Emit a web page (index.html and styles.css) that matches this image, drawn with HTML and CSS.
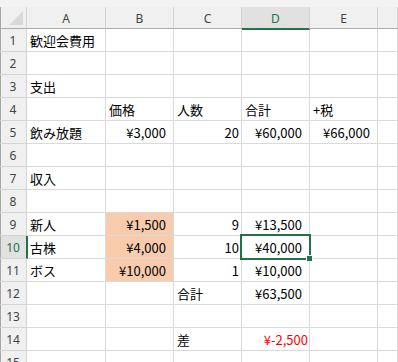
FILE: index.html
```html
<!DOCTYPE html>
<html lang="ja">
<head>
<meta charset="utf-8">
<title>歓迎会費用</title>
<link rel="stylesheet" href="styles.css">
</head>
<body>
<div class="sheet">
  <div class="strip"></div>
  <div class="grid">
    <div class="corner"><svg width="14" height="14" viewBox="0 0 14 14"><polygon points="0,14 14,14 14,0" fill="#d9d9d9"/></svg></div>
    <div class="colh">A</div>
    <div class="colh">B</div>
    <div class="colh">C</div>
    <div class="colh active">D</div>
    <div class="colh">E</div>
    <div class="colh"></div>

    <div class="rowh">1</div><div class="c">歓迎会費用</div><div class="c"></div><div class="c"></div><div class="c"></div><div class="c"></div><div class="c"></div>
    <div class="rowh">2</div><div class="c"></div><div class="c"></div><div class="c"></div><div class="c"></div><div class="c"></div><div class="c"></div>
    <div class="rowh">3</div><div class="c">支出</div><div class="c"></div><div class="c"></div><div class="c"></div><div class="c"></div><div class="c"></div>
    <div class="rowh">4</div><div class="c"></div><div class="c">価格</div><div class="c">人数</div><div class="c">合計</div><div class="c">+税</div><div class="c"></div>
    <div class="rowh">5</div><div class="c">飲み放題</div><div class="c yen">¥3,000</div><div class="c num">20</div><div class="c yen">¥60,000</div><div class="c yen">¥66,000</div><div class="c"></div>
    <div class="rowh">6</div><div class="c"></div><div class="c"></div><div class="c"></div><div class="c"></div><div class="c"></div><div class="c"></div>
    <div class="rowh">7</div><div class="c">収入</div><div class="c"></div><div class="c"></div><div class="c"></div><div class="c"></div><div class="c"></div>
    <div class="rowh">8</div><div class="c"></div><div class="c"></div><div class="c"></div><div class="c"></div><div class="c"></div><div class="c"></div>
    <div class="rowh">9</div><div class="c">新人</div><div class="c yen fill">¥1,500</div><div class="c num">9</div><div class="c yen">¥13,500</div><div class="c"></div><div class="c"></div>
    <div class="rowh active">10</div><div class="c">古株</div><div class="c yen fill">¥4,000</div><div class="c num">10</div><div class="c yen sel">¥40,000</div><div class="c"></div><div class="c"></div>
    <div class="rowh">11</div><div class="c">ボス</div><div class="c yen fill">¥10,000</div><div class="c num">1</div><div class="c yen">¥10,000</div><div class="c"></div><div class="c"></div>
    <div class="rowh">12</div><div class="c"></div><div class="c"></div><div class="c">合計</div><div class="c yen">¥63,500</div><div class="c"></div><div class="c"></div>
    <div class="rowh">13</div><div class="c"></div><div class="c"></div><div class="c"></div><div class="c"></div><div class="c"></div><div class="c"></div>
    <div class="rowh">14</div><div class="c"></div><div class="c"></div><div class="c">差</div><div class="c num neg">¥-2,500</div><div class="c"></div><div class="c"></div>
    <div class="rowh">15</div><div class="c"></div><div class="c"></div><div class="c"></div><div class="c"></div><div class="c"></div><div class="c"></div>
  </div>
</div>
</body>
</html>
```

FILE: styles.css
```css
html, body {
  margin: 0;
  padding: 0;
  background: #ffffff;
}

.sheet {
  width: 398px;
  height: 362px;
  overflow: hidden;
  background: #ffffff;
}

.strip {
  height: 7px;
  background: #f3f3f3;
}

.grid {
  display: grid;
  grid-template-columns: 27px 79px 68px 68px 68px 68px 1fr;
  grid-template-rows: 22px;
  grid-auto-rows: 23px;
}

/* headers */
.corner,
.colh,
.rowh {
  box-sizing: border-box;
  background: #f0f0f0;
  color: #444444;
  font-family: "Noto Sans", "Liberation Sans", sans-serif;
  font-size: 12px;
  display: flex;
  align-items: center;
  justify-content: center;
}

.corner {
  border-right: 1px solid #d4d4d4;
  border-bottom: 1px solid #ababab;
  justify-content: flex-end;
  align-items: flex-end;
  padding: 0 3px 3px 0;
  box-shadow: inset 1px 0 0 #a8a8a8;
}

.colh {
  border-right: 1px solid #d4d4d4;
  border-bottom: 1px solid #ababab;
  padding-top: 1px;
}

.colh.active {
  background: #e1e1e1;
  color: #217346;
  border-bottom: 2px solid #217346;
  margin-bottom: -1px;
  position: relative;
  z-index: 1;
}

.rowh {
  border-right: 1px solid #d4d4d4;
  border-bottom: 1px solid #d4d4d4;
  box-shadow: inset 1px 0 0 #a8a8a8;
}

.rowh.active {
  background: #e1e1e1;
  color: #217346;
  border-right: 2px solid #217346;
  margin-right: -1px;
  position: relative;
  z-index: 1;
}

/* cells */
.c {
  box-sizing: border-box;
  border-right: 1px solid #dadada;
  border-bottom: 1px solid #dadada;
  font-family: "Noto Sans CJK JP", "Noto Sans", sans-serif;
  font-size: 13px;
  line-height: 22px;
  color: #000000;
  padding: 1px 0 0 3px;
  white-space: nowrap;
  overflow: visible;
}

.c.num {
  text-align: right;
  padding: 1px 2px 0 0;
}

.c.yen {
  text-align: right;
  padding: 1px 7px 0 0;
}

.c.neg {
  color: #ff0000;
  padding-right: 1px;
}

.c.fill {
  background: #f8cbad;
}

.c.sel {
  position: relative;
}

.c.sel::after {
  content: "";
  position: absolute;
  left: -2px;
  top: -2px;
  right: -2px;
  bottom: -2px;
  border: 2px solid #217346;
  z-index: 2;
}

.c.sel::before {
  content: "";
  position: absolute;
  right: -4px;
  bottom: -4px;
  width: 5px;
  height: 5px;
  background: #217346;
  border: 1px solid #ffffff;
  z-index: 3;
}
```
